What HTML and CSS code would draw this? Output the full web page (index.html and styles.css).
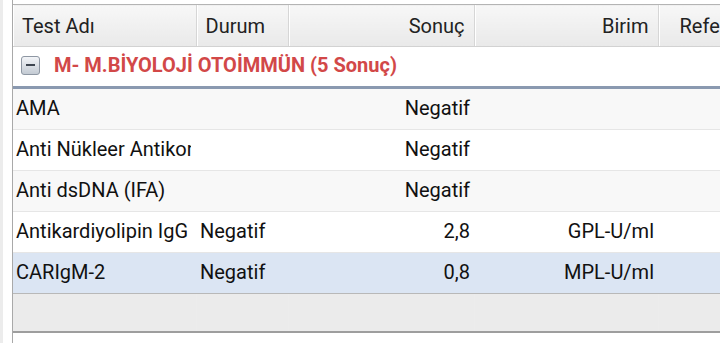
FILE: index.html
```html
<!DOCTYPE html>
<html lang="tr">
<head>
    <meta charset="UTF-8">
    <meta name="viewport" content="width=device-width, initial-scale=1.0">
    <title>Test Sonuçları</title>
    <link rel="stylesheet" href="styles.css">
</head>
<body>
    <div class="grid-wrap">
        <table class="sonuc-grid">
            <colgroup>
                <col class="c-ad">
                <col class="c-durum">
                <col class="c-sonuc">
                <col class="c-birim">
                <col class="c-ref">
            </colgroup>
            <thead>
                <tr>
                    <th>Test Adı</th>
                    <th>Durum</th>
                    <th class="sag">Sonuç</th>
                    <th class="sag">Birim</th>
                    <th class="ref">Referans</th>
                </tr>
            </thead>
            <tbody>
                <!-- Grup satırı -->
                <tr class="grup">
                    <td colspan="5">
                        <span class="toggle"><span></span></span>
                        M- M.BİYOLOJİ OTOİMMÜN (5 Sonuç)
                    </td>
                </tr>
                <tr class="alt">
                    <td>AMA</td>
                    <td></td>
                    <td class="sag">Negatif</td>
                    <td></td>
                    <td></td>
                </tr>
                <tr>
                    <td><div class="kes">Anti Nükleer Antikor</div></td>
                    <td></td>
                    <td class="sag">Negatif</td>
                    <td></td>
                    <td></td>
                </tr>
                <tr class="alt">
                    <td>Anti dsDNA (IFA)</td>
                    <td></td>
                    <td class="sag">Negatif</td>
                    <td></td>
                    <td></td>
                </tr>
                <tr>
                    <td><div class="kes">Antikardiyolipin IgG</div></td>
                    <td>Negatif</td>
                    <td class="sag">2,8</td>
                    <td class="sag">GPL-U/ml</td>
                    <td></td>
                </tr>
                <tr class="secili">
                    <td>CARIgM-2</td>
                    <td>Negatif</td>
                    <td class="sag">0,8</td>
                    <td class="sag">MPL-U/ml</td>
                    <td></td>
                </tr>
            </tbody>
            <tfoot>
                <tr>
                    <td></td>
                    <td></td>
                    <td></td>
                    <td></td>
                    <td></td>
                </tr>
            </tfoot>
        </table>
    </div>
</body>
</html>
```

FILE: styles.css
```css
body {
    margin: 0;
    height: 343px;
    overflow: hidden;
    background: #fff;
    border-left: 3px solid #ececec;
    font-family: Roboto, "Noto Sans", sans-serif;
    color: #111;
}

.grid-wrap {
    margin-left: 9px;
    padding-top: 4px;
    height: 339px;
    border-left: 1px solid #a9a9a9;
    overflow: hidden;
}

.sonuc-grid {
    table-layout: fixed;
    border-collapse: collapse;
    width: 760px;
    font-size: 20px;
}

.c-ad { width: 183px; }
.c-durum { width: 92px; }
.c-sonuc { width: 186px; }
.c-birim { width: 184px; }
.c-ref { width: 115px; }

/* Başlık */
.sonuc-grid th {
    height: 41px;
    padding: 0 9px;
    font-weight: normal;
    text-align: left;
    white-space: nowrap;
    overflow: hidden;
    background: linear-gradient(#f7f7f7, #e9e9e9);
    border-top: 1px solid #b4b4b4;
    border-bottom: 1px solid #d2d2d2;
    border-left: 1px solid #d6d6d6;
    box-shadow: inset 1px 0 0 #fff;
    color: #222;
}

.sonuc-grid th:first-child {
    border-left: none;
}

.sonuc-grid th.sag {
    text-align: right;
}

.sonuc-grid th.ref {
    padding-left: 21px;
}

.sonuc-grid td {
    height: 37px;
    padding: 0 4px 3px;
    white-space: nowrap;
    overflow: hidden;
    border-bottom: 1px solid #e6e6e6;
}

.sonuc-grid td:first-child {
    padding-left: 3px;
}

.sonuc-grid td.sag {
    text-align: right;
}

.kes {
    overflow: hidden;
    width: 175px;
}

/* Grup başlığı */
.grup td {
    height: 35px;
    padding: 0 0 4px 8px !important;
    font-size: 20px;
    font-weight: bold;
    color: #d24848;
    background: #fff;
    border-bottom: 3px solid #8a99b0;
}

.toggle {
    display: inline-block;
    vertical-align: -3px;
    width: 17px;
    height: 17px;
    margin-right: 9px;
    border: 1px solid #8e97a3;
    border-radius: 3px;
    background: linear-gradient(#f3f5f8, #c3cad3);
    position: relative;
}

.toggle span {
    position: absolute;
    left: 4px;
    top: 7px;
    width: 9px;
    height: 2px;
    background: #3d4550;
}

.alt td {
    background: #f8f8f8;
}

.secili td {
    background: #dbe5f3;
    border-top: 1px dotted #9aa6bb;
    border-bottom: 1px dotted #7d8799;
}

.sonuc-grid tfoot td {
    height: 37px;
    padding: 0;
    background: #ebebeb;
    border-top: 1px solid #b8b8b8;
    border-bottom: 2px solid #9e9e9e;
    border-left: 1px solid #ececec;
}

.sonuc-grid tfoot td:first-child {
    border-left: none;
}
```
